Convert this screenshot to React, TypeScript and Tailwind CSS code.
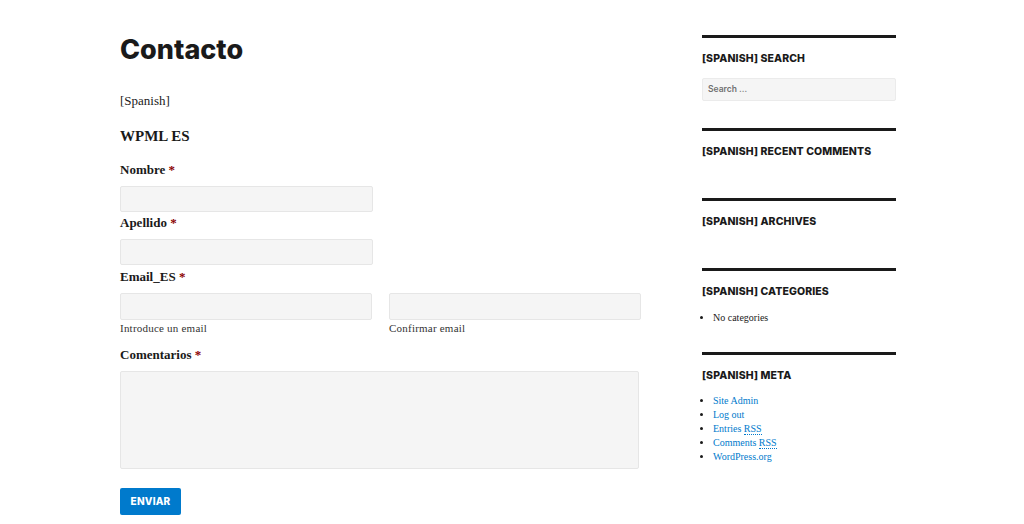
import React from 'react';

// ── Fonts ─────────────────────────────────────────────────────

const SANS = "font-['Inter','Liberation_Sans',sans-serif]";
const SERIF = "font-['Liberation_Serif','DejaVu_Serif',serif]";

// ── Form bits ─────────────────────────────────────────────────

function Label({ text }: { text: string }) {
  return (
    <label className={`block text-[13px] leading-5 font-bold text-[#1a1a1a] ${SERIF}`}>
      {text} <span className="text-[#8b0000]">*</span>
    </label>
  );
}

function Field({ className = '' }: { className?: string }) {
  return <div className={`bg-[#f5f5f5] border border-[#e6e6e6] rounded-[2px] ${className}`} />;
}

// ── Sidebar widget ────────────────────────────────────────────

function Widget({ title, children }: { title: string; children?: React.ReactNode }) {
  return (
    <section className="border-t-[3px] border-[#1a1a1a] pt-3 mb-[27px]">
      <h2 className={`pt-px pb-[11px] text-[10.5px] leading-4 font-extrabold uppercase text-[#1a1a1a] tracking-[0.01em] ${SANS}`}>{title}</h2>
      {children}
    </section>
  );
}

const META = [
  { text: 'Site Admin' },
  { text: 'Log out' },
  { text: 'Entries', abbr: 'RSS' },
  { text: 'Comments', abbr: 'RSS' },
  { text: 'WordPress.org' },
];

// ── Page ──────────────────────────────────────────────────────

export default function App() {
  return (
    <div className="w-[1024px] h-[524px] bg-white overflow-hidden flex">
      {/* Main column */}
      <main className="ml-[120px] w-[521px] pt-[31px]">
        <h1 className={`text-[27px] leading-[38px] font-extrabold text-[#1a1a1a] ${SANS}`}>Contacto</h1>

        <p className={`mt-[22px] text-[13px] leading-5 text-[#1a1a1a] ${SERIF}`}>[Spanish]</p>

        <h3 className={`mt-[14px] text-[15px] leading-[22px] font-bold text-[#1a1a1a] ${SERIF}`}>WPML ES</h3>

        <div className="mt-[13px]">
          <Label text="Nombre" />
          <Field className="mt-[6px] w-[253px] h-[26px]" />
        </div>

        <div className="mt-[1px]">
          <Label text="Apellido" />
          <Field className="mt-[6px] w-[253px] h-[26px]" />
        </div>

        <div className="mt-[2px]">
          <Label text="Email_ES" />
          <div className="mt-[6px] flex gap-[17px]">
            <div className="w-[252px]">
              <Field className="h-[27px]" />
              <p className={`text-[11px] leading-4 text-[#333] tracking-[0.02em] ${SERIF}`}>Introduce un email</p>
            </div>
            <div className="w-[252px]">
              <Field className="h-[27px]" />
              <p className={`text-[11px] leading-4 text-[#333] tracking-[0.02em] ${SERIF}`}>Confirmar email</p>
            </div>
          </div>
        </div>

        <div className="mt-[9px]">
          <Label text="Comentarios" />
          <Field className="mt-[6px] w-[519px] h-[98px]" />
        </div>

        <button className={`mt-[19px] w-[61px] h-[27px] bg-[#007acc] rounded-[2px] text-white text-[10px] font-extrabold tracking-[0.02em] ${SANS}`}>
          ENVIAR
        </button>
      </main>

      {/* Sidebar */}
      <aside className="ml-[61px] w-[194px] pt-[35px]">
        <Widget title="[Spanish] Search">
          <div className={`h-[23px] bg-[#f5f5f5] border border-[#ebebeb] rounded-[2px] flex items-center px-[5px] text-[8.5px] font-semibold text-[#707070] ${SANS}`}>
            Search …
          </div>
        </Widget>
        <Widget title="[Spanish] Recent Comments" />
        <Widget title="[Spanish] Archives" />
        <Widget title="[Spanish] Categories">
          <ul className={`list-disc pl-[11px] text-[10px] leading-[14px] text-[#1a1a1a] ${SERIF}`}>
            <li>No categories</li>
          </ul>
        </Widget>
        <Widget title="[Spanish] Meta">
          <ul className={`-mt-px list-disc pl-[11px] text-[10px] leading-[14px] text-[#1a1a1a] ${SERIF}`}>
            {META.map(m => (
              <li key={m.text}>
                <a className="text-[#007acc]">
                  {m.text}
                  {m.abbr && (
                    <> <abbr className="no-underline border-b border-dotted border-[#007acc]">{m.abbr}</abbr></>
                  )}
                </a>
              </li>
            ))}
          </ul>
        </Widget>
      </aside>
    </div>
  );
}
